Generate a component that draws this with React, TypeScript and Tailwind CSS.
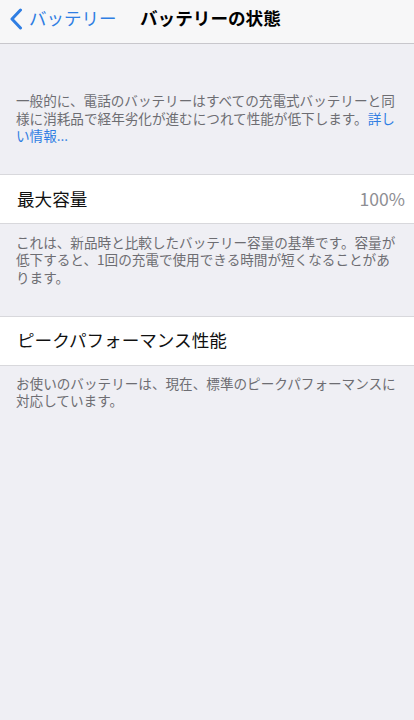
import React from 'react';

const jp = "font-['Noto_Sans_CJK_JP','Noto_Sans',sans-serif]";

const Footer: React.FC<{ children: React.ReactNode; className?: string }> = ({ children, className }) => (
  <p className={`px-[16px] text-[13.6px] leading-[17.6px] text-[#6d6d72] ${className ?? ''}`}>{children}</p>
);

const App: React.FC = () => {
  return (
    <div className={`w-[414px] h-[720px] bg-[#efeff4] ${jp} overflow-hidden`}>
      {/* nav bar */}
      <header className="h-[44px] bg-[#f7f7f8] border-b border-[#c8c7cc] flex items-center relative">
        <button className="flex items-center pl-[9px] gap-[6px] text-[#2f7ee3] text-[17.5px] h-full">
          <svg width="14" height="22" viewBox="0 0 14 22" className="-mt-[6px]">
            <path d="M11.5 2 L3 11 L11.5 20" fill="none" stroke="#2f7ee3" strokeWidth="3" strokeLinecap="round" strokeLinejoin="round" />
          </svg>
          <span className="-mt-[6px]">バッテリー</span>
        </button>
        <h1 className="absolute left-[140px] top-[5px] text-[17.6px] font-bold text-black">バッテリーの状態</h1>
      </header>

      <Footer className="pt-[48px]">
        一般的に、電話のバッテリーはすべての充電式バッテリーと同様に消耗品で経年劣化が進むにつれて性能が低下します。<span className="text-[#2f7ee3]">詳しい情報...</span>
      </Footer>

      <div className="mt-[29px] h-[50px] bg-white border-y border-[#d8d8dc] flex items-center justify-between pl-[17px] pr-[9px]">
        <span className="text-[17.6px] text-[#111]">最大容量</span>
        <span className="text-[17.6px] text-[#8e8e93]">100%</span>
      </div>

      <Footer className="pt-[10px]">
        これは、新品時と比較したバッテリー容量の基準です。容量が低下すると、1回の充電で使用できる時間が短くなることがあります。
      </Footer>

      <div className="mt-[29px] h-[50px] bg-white border-y border-[#d8d8dc] flex items-center px-[17px]">
        <span className="text-[17.6px] text-[#111]">ピークパフォーマンス性能</span>
      </div>

      <Footer className="pt-[9px]">
        お使いのバッテリーは、現在、標準のピークパフォーマンスに対応しています。
      </Footer>
    </div>
  );
};

export default App;
